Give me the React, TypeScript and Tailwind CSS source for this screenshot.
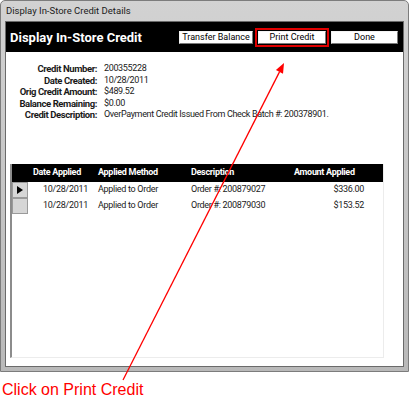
import React from "react";

const ui = "font-['Roboto','Liberation_Sans',sans-serif]";

const details = [
  ["Credit Number:", "200355228"],
  ["Date Created:", "10/28/2011"],
  ["Orig Credit Amount:", "$489.52"],
  ["Balance Remaining:", "$0.00"],
  ["Credit Description:", "OverPayment Credit Issued From Check Batch #: 200378901."],
];

const rows = [
  { date: "10/28/2011", method: "Applied to Order", desc: "Order #: 200879027", amount: "$336.00", current: true },
  { date: "10/28/2011", method: "Applied to Order", desc: "Order #: 200879030", amount: "$153.52", current: false },
];

function Btn({ label, w }: { label: string; w: string }) {
  return (
    <div
      className={`${w} h-[13px] bg-white border border-t-[#f4f4f4] border-l-[#f4f4f4] border-r-[#7a7a7a] border-b-[#7a7a7a] text-[9px] leading-[11px] text-black text-center whitespace-nowrap`}
    >
      {label}
    </div>
  );
}

export default function App() {
  return (
    <div className={`relative w-[409px] h-[398px] bg-white overflow-hidden ${ui}`}>
      {/* window */}
      <div className="w-[409px] h-[372px] flex flex-col bg-gradient-to-b from-[#d2d2d2] to-[#b9b9b9] border border-[#7c7c7c] rounded-t-[5px]">
        <div className="h-[20px] flex items-center pl-[5px] text-[9.5px] text-[#1b1b1b] whitespace-nowrap">
          Display In-Store Credit Details
        </div>
        <div className="flex-1 mx-[4px] mb-[4px] bg-white border border-[#6a6a6a] flex flex-col">
          {/* header */}
          <div className="h-[30px] bg-black flex items-center pl-[4px] pr-[5px]">
            <div className="text-white font-bold text-[13px] leading-none whitespace-nowrap">Display In-Store Credit</div>
            <div className="ml-auto flex items-center gap-[2px]">
              <Btn label="Transfer Balance" w="w-[74px]" />
              <div className="border-2 border-[#e00000] p-[1px]">
                <Btn label="Print Credit" w="w-[68px]" />
              </div>
              <Btn label="Done" w="w-[67px]" />
            </div>
          </div>

          {/* details */}
          <div className="pt-[11px] flex flex-col text-[9.5px] leading-[11.5px] text-[#1a1a1a] whitespace-nowrap">
            {details.map(([k, v]) => (
              <div key={k} className="flex">
                <div className="w-[91px] text-right font-bold tracking-[-0.4px]">{k}</div>
                <div className="pl-[7px] text-[9px] tracking-[-0.35px]">{v}</div>
              </div>
            ))}
          </div>

          {/* subform */}
          <div className="mt-[43px] ml-[4px] mr-[19px] mb-[8px] flex-1 border-l-2 border-l-[#8c8c8c] border-r border-r-[#ececec] border-b border-b-[#ececec]">
            <div className="h-[18px] bg-black text-white font-bold text-[9px] tracking-[-0.3px] flex items-center whitespace-nowrap">
              <div className="w-[16px]" />
              <div className="w-[65px] pl-[5px]">Date Applied</div>
              <div className="w-[93px] pl-[5px]">Applied Method</div>
              <div className="w-[100px] pl-[5px]">Description</div>
              <div className="w-[83px] pl-[8px]">Amount Applied</div>
            </div>
            {rows.map((r) => (
              <div key={r.desc} className="h-[16px] flex items-center text-[9px] tracking-[-0.3px] text-[#1a1a1a] whitespace-nowrap">
                <div className="w-[16px] h-[16px] bg-[#d6d6d6] border border-[#9a9a9a] flex items-center justify-center">
                  {r.current && (
                    <svg width="6" height="8" viewBox="0 0 6 8">
                      <polygon points="0,0 6,4 0,8" fill="#000" />
                    </svg>
                  )}
                </div>
                <div className="w-[65px] text-right pr-[5px]">{r.date}</div>
                <div className="w-[93px] pl-[5px]">{r.method}</div>
                <div className="w-[100px] pl-[5px]">{r.desc}</div>
                <div className="w-[83px] text-right pr-[5px]">{r.amount}</div>
              </div>
            ))}
          </div>
        </div>
      </div>

      <div className="pt-[10px] pl-[2px] text-[16px] leading-[16px] text-[#ff0000] font-['Liberation_Sans',sans-serif] whitespace-nowrap">
        Click on Print Credit
      </div>

      {/* callout arrow */}
      <svg className="absolute inset-0 pointer-events-none" width="409" height="398" viewBox="0 0 409 398">
        <line x1="123" y1="380" x2="279.5" y2="71.9" stroke="#ff0000" strokeWidth="1.3" />
        <polygon points="284,63 283,73.7 275.9,70.1" fill="#ff0000" />
      </svg>
    </div>
  );
}
